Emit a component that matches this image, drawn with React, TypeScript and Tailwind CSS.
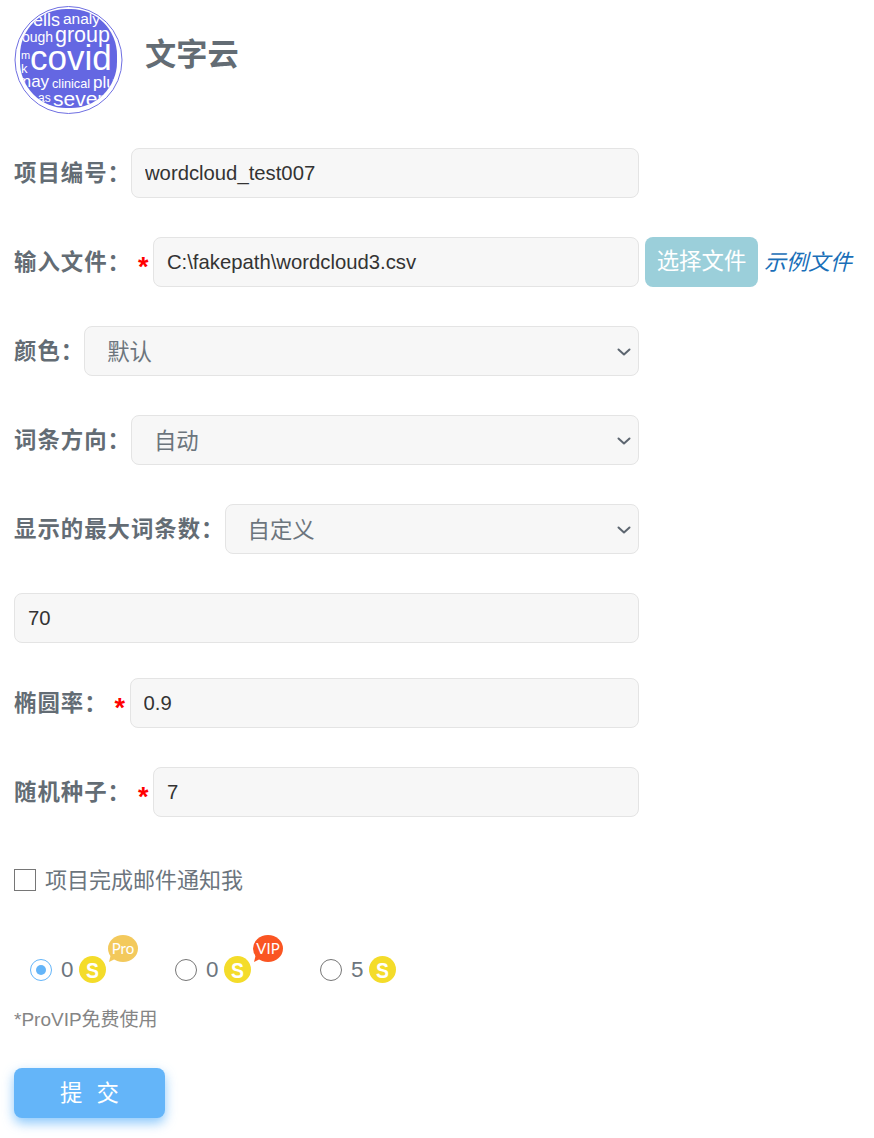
import type { ReactNode } from "react";

const cjk = "font-['Liberation_Sans','Noto_Sans_CJK_SC',sans-serif]";
const fieldBase =
  "h-[50px] min-w-0 flex-1 rounded-lg border border-[#e4e4e4] bg-[#f7f7f7] text-[20.3px] outline-none";

function Label({ children }: { children: ReactNode }) {
  return (
    <label className="shrink-0 pt-[2px] text-[22.4px] font-bold tracking-[1px] whitespace-nowrap text-[#636c74]">
      {children}
    </label>
  );
}

function Star() {
  return (
    <span className="flex h-[50px] w-[22px] shrink-0 items-center pt-[10px] pl-[7px] text-[27px] font-bold text-[#ff0000]">
      *
    </span>
  );
}

function TextRow({
  label,
  value,
  required,
}: {
  label: string;
  value: string;
  required?: boolean;
}) {
  return (
    <div className="flex w-[625px] items-center">
      <Label>{label}</Label>
      {required && <Star />}
      <input
        readOnly
        defaultValue={value}
        className={`${fieldBase} px-[13px] text-[#333333]`}
      />
    </div>
  );
}

function SelectRow({ label, value }: { label: string; value: string }) {
  return (
    <div className="flex w-[625px] items-center">
      <Label>{label}</Label>
      <div className="relative flex min-w-0 flex-1">
        <select
          defaultValue={value}
          className={`${fieldBase} appearance-none pt-[3px] pl-[22px] text-[22.4px] text-[#6c757d]`}
        >
          <option>{value}</option>
        </select>
        <svg
          viewBox="0 0 16 16"
          className="pointer-events-none absolute top-[18px] right-[7px] h-4 w-4"
          fill="none"
          stroke="#5d6670"
          strokeWidth="2"
          strokeLinecap="round"
          strokeLinejoin="round"
        >
          <path d="M2.5 5.5 8 10.5l5.5-5" />
        </svg>
      </div>
    </div>
  );
}

function Logo() {
  // word, page x, page y of the baseline, font size
  const words: [string, number, number, number][] = [
    ["ells", 33, 26, 18],
    ["analy", 63, 24, 15.5],
    ["ough", 22, 42, 14],
    ["group", 55, 42, 21.5],
    ["m", 21, 59, 11],
    ["covid", 30, 70, 35],
    ["k", 21, 73, 13],
    ["may", 17, 87, 17],
    ["clinical", 52, 88, 12.7],
    ["plu", 93, 88, 17],
    ["as", 38, 102, 12],
    ["severe", 53, 106, 21],
  ];
  return (
    <svg viewBox="0 0 110 110" className="h-[110px] w-[110px] shrink-0">
      <defs>
        <clipPath id="logo-disc">
          <rect x="6" y="4" width="97" height="99" rx="46" />
        </clipPath>
      </defs>
      <circle cx="54.5" cy="55" r="53.5" fill="#fff" stroke="#6f6fe2" strokeWidth="1" />
      <rect x="6" y="4" width="97" height="99" rx="46" fill="#6467e2" />
      <g clipPath="url(#logo-disc)" fill="#fff" fontFamily="'Liberation Sans', sans-serif">
        {words.map(([w, x, y, s]) => (
          <text key={w} x={x - 14} y={y - 5} fontSize={s}>
            {w}
          </text>
        ))}
      </g>
    </svg>
  );
}

function Coin() {
  return (
    <svg viewBox="0 0 27 27" className="h-[27px] w-[27px] shrink-0">
      <circle cx="13.5" cy="13.5" r="13.5" fill="#f4dc2a" />
      <text
        x="7"
        y="21.5"
        textLength="13"
        lengthAdjust="spacingAndGlyphs"
        fontSize="22"
        fontWeight="bold"
        fill="#fff"
        fontFamily="'Liberation Sans', sans-serif"
      >
        S
      </text>
    </svg>
  );
}

function Bubble({ text, color }: { text: string; color: string }) {
  return (
    <svg
      viewBox="0 0 30 27"
      className="absolute top-[-21px] left-[29px] h-[27px] w-[30px]"
    >
      <path d="M1 27 3 19 9 23Z" fill={color} />
      <ellipse cx="15" cy="13.5" rx="15" ry="13.5" fill={color} />
      <text
        x="15"
        y="18.5"
        textAnchor="middle"
        fontSize="15"
        fill="#fff"
        fontFamily="Lato, sans-serif"
      >
        {text}
      </text>
    </svg>
  );
}

function Price({
  value,
  checked,
  badge,
  color,
}: {
  value: string;
  checked?: boolean;
  badge?: string;
  color?: string;
}) {
  return (
    <div className="flex h-[27px] w-[145px] items-center">
      <span
        className={`flex h-[22px] w-[22px] items-center justify-center rounded-full border bg-white ${
          checked ? "border-[#64b5f9]" : "border-[#767676]"
        }`}
      >
        {checked && <span className="h-[10px] w-[10px] rounded-full bg-[#64b5f9]" />}
      </span>
      <span className="ml-[9px] w-[18px] text-[22.4px] text-[#6c757d]">{value}</span>
      <span className="relative flex">
        <Coin />
        {badge && color && <Bubble text={badge} color={color} />}
      </span>
    </div>
  );
}

export default function App() {
  return (
    <div className={`${cjk} flex h-[1138px] w-[874px] flex-col overflow-hidden bg-white pt-[5px] pl-[14px]`}>
      {/* header */}
      <div className="flex items-center gap-[21px]">
        <Logo />
        <h1 className="mb-[9px] text-[31.2px] font-bold text-[#636c74]">文字云</h1>
      </div>

      {/* form */}
      <div className="mt-[33px] flex flex-col gap-[39px]">
        <TextRow label="项目编号：" value="wordcloud_test007" />
        <div className="flex items-center">
          <TextRow label="输入文件：" value="C:\fakepath\wordcloud3.csv" required />
          <span className="ml-[6px] flex h-[50px] w-[113px] items-center justify-center rounded-lg bg-[#9bcfda] text-[22.4px] text-white">
            选择文件
          </span>
          <a className="ml-[6px] text-[22px] text-[#1a6fb8] italic">示例文件</a>
        </div>
        <SelectRow label="颜色：" value="默认" />
        <SelectRow label="词条方向：" value="自动" />
        <SelectRow label="显示的最大词条数：" value="自定义" />
        <input
          readOnly
          defaultValue="70"
          className={`${fieldBase} w-[625px] flex-none px-[13px] text-[#333333]`}
        />
      </div>
      <div className="mt-[35px] flex flex-col gap-[39px]">
        <TextRow label="椭圆率：" value="0.9" required />
        <TextRow label="随机种子：" value="7" required />
      </div>

      <label className="mt-[46px] flex h-[34px] items-center">
        <span className="h-[22px] w-[22px] border border-[#767676] bg-white" />
        <span className="ml-[9px] text-[22px] text-[#6c757d]">项目完成邮件通知我</span>
      </label>

      <div className="mt-[59px] flex pl-[16px]">
        <Price value="0" checked badge="Pro" color="#f3c95c" />
        <Price value="0" badge="VIP" color="#fa5522" />
        <Price value="5" />
      </div>

      <p className="mt-[24px] h-[26px] text-[19px] leading-[26px] text-[#858585]">*ProVIP免费使用</p>

      <button className="mt-[35px] h-[50px] w-[151px] rounded-lg bg-[#64b5f9] pt-[2px] pl-[4px] text-[22.4px] tracking-[4px] text-white shadow-[0_5px_12px_rgba(100,181,249,0.75)]">
        提 交
      </button>
    </div>
  );
}
